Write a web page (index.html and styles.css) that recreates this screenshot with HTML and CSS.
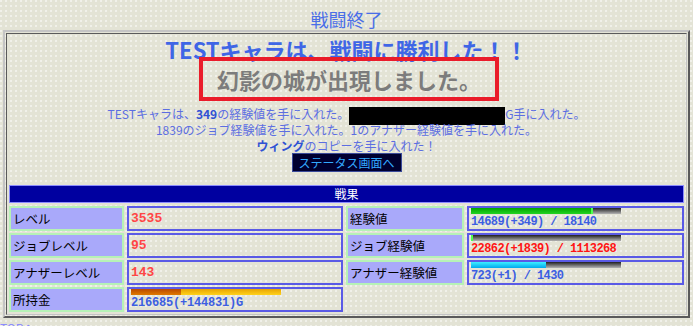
FILE: index.html
```html
<!DOCTYPE html>
<html lang="ja">
<head>
  <meta charset="UTF-8" />
  <title>戦闘終了</title>
  <link rel="stylesheet" href="styles.css">
</head>
<body>

  <div class="page-title">戦闘終了</div>

  <div class="frame">
    <div class="frame-inner">
      <h1 class="result">TESTキャラは、戦闘に勝利した！！</h1>
      <div class="event-wrap">
        <div class="event">幻影の城が出現しました。</div>
      </div>

      <div class="log">
        <p>TESTキャラは、<b>349</b>の経験値を手に入れた。<span class="hidden-box"></span>G手に入れた。</p>
        <p>1839のジョブ経験値を手に入れた。1のアナザー経験値を手に入れた。</p>
        <p><b>ウィング</b>のコピーを手に入れた！</p>
        <a class="status-btn" href="#">ステータス画面へ</a>
      </div>

      <div class="spoils">
        <div class="spoils-head">戦果</div>

        <div class="label">レベル</div>
        <div class="value"><span class="num">3535</span></div>
        <div class="label">経験値</div>
        <div class="value">
          <div class="bar"><div class="fill green" style="width: 81%"></div></div>
          <span class="stat">14689(+349) / 18140</span>
        </div>

        <div class="label">ジョブレベル</div>
        <div class="value"><span class="num">95</span></div>
        <div class="label">ジョブ経験値</div>
        <div class="value">
          <div class="bar"><div class="fill green" style="width: 0%"></div></div>
          <span class="stat red">22862(+1839) / 1113268</span>
        </div>

        <div class="label">アナザーレベル</div>
        <div class="value"><span class="num">143</span></div>
        <div class="label">アナザー経験値</div>
        <div class="value">
          <div class="bar"><div class="fill cyan" style="width: 50%"></div></div>
          <span class="stat">723(+1) / 1430</span>
        </div>

        <div class="label">所持金</div>
        <div class="value">
          <div class="bar gold"><div class="fill dark-gold" style="width: 33%"></div></div>
          <span class="stat money">216685(+144831)G</span>
        </div>
      </div>
    </div>
  </div>

  <a class="top-link" href="#">TOPへ</a>

</body>
</html>
```

FILE: styles.css
```css
body {
  font-family: "Noto Sans CJK JP", "Noto Sans", sans-serif;
  font-size: 12px;
  margin: 0;
  background:
    radial-gradient(circle at 1px 1px, #f1f1ea 0.7px, transparent 0.9px) 0 0 / 5px 5px,
    #e3e3d5;
  color: #000;
}

.page-title {
  padding-top: 9px;
  line-height: 21px;
  font-size: 18px;
  text-align: center;
  color: #4a6ee8;
}

.frame {
  margin: 0 3px;
  padding: 1px;
  border: 2px solid;
  border-color: #c4c4c4 #5a5a5a #5a5a5a #c4c4c4;
}

.frame-inner {
  border: 1px solid;
  border-color: #5a5a5a #c4c4c4 #c4c4c4 #5a5a5a;
  padding: 5px 2px 2px 2px;
}

h1.result {
  margin: 0;
  font-size: 22px;
  line-height: 20px;
  text-align: center;
  color: #3f66e6;
}

.event-wrap {
  text-align: center;
  margin-top: -2px;
}

.event {
  display: inline-block;
  border: 4px solid #ea1c2a;
  height: 36px;
  line-height: 36px;
  padding: 0 14px 0 14px;
  margin-left: 5px;
  font-size: 22px;
  font-weight: bold;
  color: #7c7c7c;
}

.log {
  margin-top: 5px;
  text-align: center;
  color: #5c6ee2;
}

.log p {
  margin: 0;
  height: 16px;
  line-height: 16px;
}

.log b {
  color: #2f52d4;
}

.hidden-box {
  display: inline-block;
  width: 156px;
  height: 18px;
  margin: -2px 0;
  vertical-align: middle;
  background: #000;
}

.status-btn {
  display: block;
  width: 108px;
  height: 17px;
  line-height: 17px;
  margin: -1px auto 0;
  border: 1px solid #3a4a9a;
  background: #000030;
  color: #33aaff;
  text-decoration: none;
}

.spoils {
  display: grid;
  grid-template-columns: 115px 216px 118px 1fr;
  grid-template-rows: 19px;
  grid-auto-rows: 25px;
  column-gap: 3px;
  row-gap: 2px;
  margin-top: 13px;
}

.spoils-head {
  grid-column: 1 / -1;
  height: 18px;
  box-sizing: border-box;
  border: 1px solid #8c8cff;
  background: #0000a0;
  color: #fff;
  line-height: 16px;
  text-align: center;
}

.label {
  background: #a9a9fa;
  border: 2px solid #b6f2b6;
  padding-left: 2px;
  line-height: 21px;
  font-size: 12.5px;
}

.value {
  border: 2px solid #5a5ae6;
  display: flex;
  flex-direction: column;
  justify-content: center;
  padding-left: 2px;
}

.num {
  font-family: "Liberation Mono", monospace;
  font-weight: bold;
  font-size: 13px;
  color: #ff4646;
}

.bar {
  width: 150px;
  height: 6px;
  background: linear-gradient(#202020, #b4b4b4);
}

.bar.gold {
  background: linear-gradient(#e8a400, #ffd21a);
}

.fill {
  height: 100%;
}

.fill.green {
  background: linear-gradient(#00a400, #22d422);
  border-right: 2px solid #50ff50;
  box-sizing: border-box;
}

.fill.cyan {
  background: linear-gradient(#3cf0ff, #00a8ee);
}

.fill.dark-gold {
  background: linear-gradient(#b84800, #e07a00);
}

.stat {
  font-family: "Liberation Mono", monospace;
  font-weight: bold;
  font-size: 12px;
  letter-spacing: -0.6px;
  line-height: 14px;
  color: #3c5ee2;
  margin-top: 1px;
}

.stat.red {
  color: #ff1414;
}

.stat.money {
  letter-spacing: -0.2px;
}

.value:has(.bar) {
  justify-content: flex-start;
}

.top-link {
  display: block;
  margin-top: 1px;
  font-size: 12px;
  color: #8c8cff;
}
```
